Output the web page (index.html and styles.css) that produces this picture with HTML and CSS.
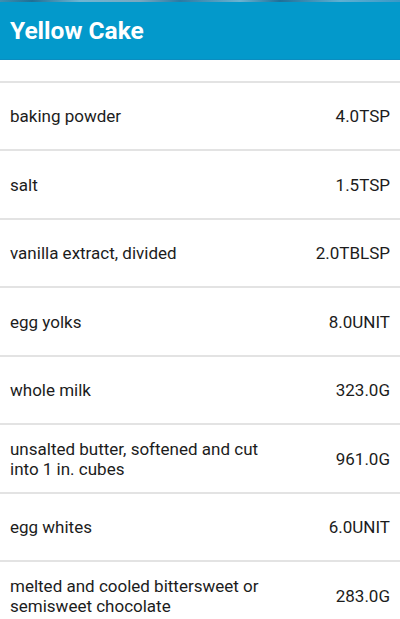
FILE: index.html
```html
<!DOCTYPE html>
<html>
<head>
<meta charset="utf-8">
<link rel="stylesheet" href="styles.css">
</head>
<body>
<div class="app">
  <header class="bar">
    <div class="status"></div>
    <h1 class="title">Yellow Cake</h1>
  </header>
  <div class="list">
    <div class="row row-clipped"><span class="name"></span><span class="qty"></span></div>
    <div class="row"><span class="name">baking powder</span><span class="qty">4.0TSP</span></div>
    <div class="row"><span class="name">salt</span><span class="qty">1.5TSP</span></div>
    <div class="row"><span class="name">vanilla extract, divided</span><span class="qty">2.0TBLSP</span></div>
    <div class="row"><span class="name">egg yolks</span><span class="qty">8.0UNIT</span></div>
    <div class="row"><span class="name">whole milk</span><span class="qty">323.0G</span></div>
    <div class="row"><span class="name">unsalted butter, softened and cut into 1 in. cubes</span><span class="qty">961.0G</span></div>
    <div class="row"><span class="name">egg whites</span><span class="qty">6.0UNIT</span></div>
    <div class="row"><span class="name">melted and cooled bittersweet or semisweet chocolate</span><span class="qty">283.0G</span></div>
  </div>
</div>
</body>
</html>
```
FILE: styles.css
```css
html, body {
  margin: 0;
  padding: 0;
  background: #ffffff;
}
body {
  font-family: Roboto, "Noto Sans", sans-serif;
  width: 400px;
  height: 619px;
  overflow: hidden;
}
.app {
  display: flex;
  flex-direction: column;
  height: 619px;
}
.bar {
  background: #0399cb;
  height: 59px;
  border-bottom: 1px solid #0a8dc0;
  display: flex;
  flex-direction: column;
  flex: none;
}
.status {
  height: 2px;
  background: linear-gradient(90deg, #3f8fb0 0%, #1f6f95 8%, #6fb5d2 20%, #7aa7bf 35%, #2a7aa3 45%, #6cb3d1 60%, #1e6f98 70%, #5fb0d2 85%, #3a98c6 100%);
}
.title {
  margin: 0;
  padding: 0 10px;
  color: #ffffff;
  font-weight: 700;
  font-size: 24.5px;
  line-height: 57px;
  height: 57px;
}
.list {
  flex: 1;
  overflow: hidden;
  display: flex;
  flex-direction: column;
}
.row {
  flex: none;
  height: 66.5px;
  border-bottom: 2px solid #e3e3e3;
  display: flex;
  align-items: center;
  justify-content: space-between;
  padding: 1px 10px 0;
  box-sizing: content-box;
  height: 65.5px;
  color: #1c1c1c;
  font-size: 17px;
  line-height: 20px;
}
.row-clipped {
  margin-top: -46px;
}
.name {
  max-width: 262px;
}
.qty {
  text-align: right;
  white-space: nowrap;
}
```
